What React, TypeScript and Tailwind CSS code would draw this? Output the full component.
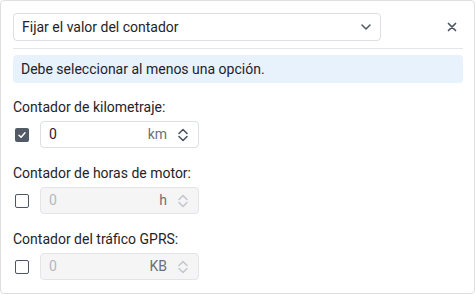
import React, { useState } from "react";

const font = { fontFamily: "Roboto, 'Liberation Sans', sans-serif" };

function Spinner({ disabled }: { disabled?: boolean }) {
  return (
    <svg width="12" height="16" viewBox="0 0 12 16" fill="none" className={disabled ? "text-[#c4c7cc]" : "text-[#4b5563]"}>
      <path d="M2 6.5L6 2.5L10 6.5" stroke="currentColor" strokeWidth="1.6" strokeLinecap="round" strokeLinejoin="round" />
      <path d="M2 9.5L6 13.5L10 9.5" stroke="currentColor" strokeWidth="1.6" strokeLinecap="round" strokeLinejoin="round" />
    </svg>
  );
}

interface CounterProps {
  label: string;
  unit: string;
  checked: boolean;
  onToggle: () => void;
}

function Counter({ label, unit, checked, onToggle }: CounterProps) {
  const disabled = !checked;
  return (
    <div className="flex flex-col">
      <div className="text-[14px] leading-[20px] text-[#1f2328]">{label}</div>
      <div className="mt-[4px] flex items-center">
        <button
          onClick={onToggle}
          className={
            checked
              ? "ml-[2px] flex h-[14px] w-[14px] items-center justify-center rounded-[2px] bg-[#525a66]"
              : "ml-[2px] h-[14px] w-[14px] rounded-[2px] border-[1.5px] border-[#4b5563] bg-white"
          }
        >
          {checked && (
            <svg width="10" height="10" viewBox="0 0 10 10" fill="none">
              <path d="M2 5.2L4.1 7.2L8 2.8" stroke="white" strokeWidth="1.5" strokeLinecap="round" strokeLinejoin="round" />
            </svg>
          )}
        </button>
        <div
          className={
            disabled
              ? "ml-[11px] flex h-[27px] w-[159px] items-center rounded-[4px] border border-[#e2e4e7] bg-[#f5f5f6] pl-[8px] pr-[9px]"
              : "ml-[11px] flex h-[27px] w-[159px] items-center rounded-[4px] border border-[#dcdfe3] bg-white pl-[8px] pr-[9px]"
          }
        >
          <span className={disabled ? "flex-1 text-[14px] text-[#b4b8be]" : "flex-1 text-[14px] text-[#1f2328]"}>0</span>
          <span className="mr-[10px] text-[14px] text-[#6b7078]">{unit}</span>
          <Spinner disabled={disabled} />
        </div>
      </div>
    </div>
  );
}

export default function App() {
  const [checks, setChecks] = useState([true, false, false]);
  const toggle = (i: number) => setChecks((c) => c.map((v, j) => (j === i ? !v : v)));

  return (
    <div className="h-[295px] w-[476px] bg-white" style={font}>
      <div className="flex h-[294px] w-[475px] flex-col rounded-[4px] border border-[#dedfe2] px-[12px] pt-[12px]">
        {/* Header */}
        <div className="flex items-center">
          <div className="flex h-[28px] w-[368px] items-center justify-between rounded-[4px] border border-[#dcdfe3] pl-[8px] pr-[9px]">
            <span className="text-[14px] text-[#1f2328]">Fijar el valor del contador</span>
            <svg width="10" height="6" viewBox="0 0 10 6" fill="none">
              <path d="M1 1L5 5L9 1" stroke="#4b5563" strokeWidth="1.5" strokeLinecap="round" strokeLinejoin="round" />
            </svg>
          </div>
          <button className="ml-[64px] flex h-[14px] w-[14px] items-center justify-center">
            <svg width="10" height="10" viewBox="0 0 10 10" fill="none">
              <path d="M1.5 1.5L8.5 8.5M8.5 1.5L1.5 8.5" stroke="#4b5563" strokeWidth="1.7" strokeLinecap="round" />
            </svg>
          </button>
        </div>

        <div className="mt-[7px] h-px w-[450px] bg-[#e3e5e8]" />

        {/* Info */}
        <div className="mt-[6px] flex h-[28px] w-[450px] items-center rounded-[4px] bg-[#e7f2fc] pl-[8px] text-[14px] text-[#1f2328]">
          Debe seleccionar al menos una opción.
        </div>

        <div className="mt-[14px] flex flex-col gap-[15px]">
          <Counter label="Contador de kilometraje:" unit="km" checked={checks[0]} onToggle={() => toggle(0)} />
          <Counter label="Contador de horas de motor:" unit="h" checked={checks[1]} onToggle={() => toggle(1)} />
          <Counter label="Contador del tráfico GPRS:" unit="KB" checked={checks[2]} onToggle={() => toggle(2)} />
        </div>
      </div>
    </div>
  );
}
